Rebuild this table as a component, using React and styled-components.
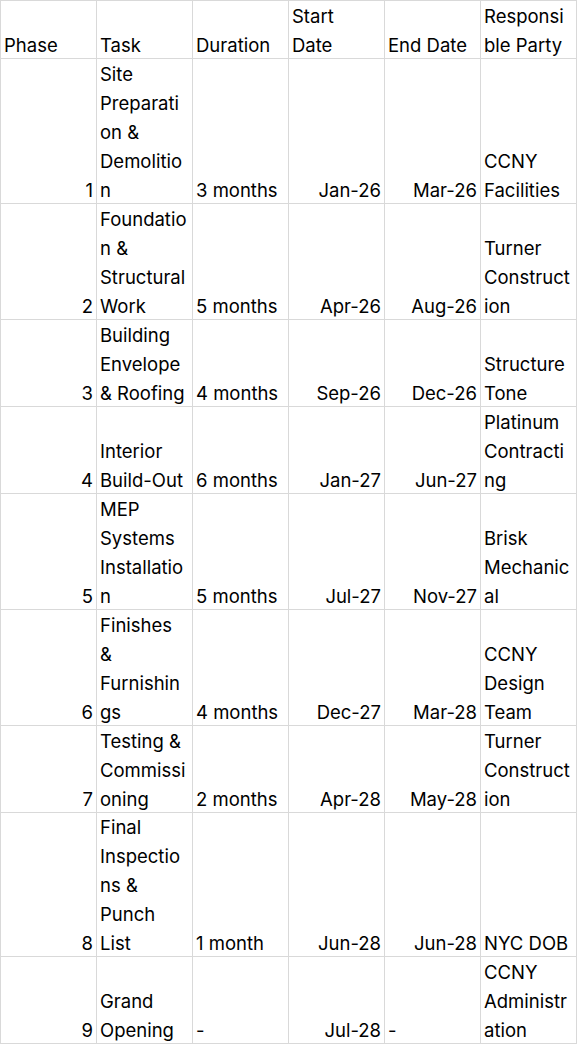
import styled, { createGlobalStyle } from 'styled-components';

const GlobalStyle = createGlobalStyle`
  html, body {
    margin: 0;
    padding: 0;
    background: #ffffff;
  }
  body {
    font-family: Inter, 'Open Sans', 'Liberation Sans', sans-serif;
    color: #000;
  }
`;

const header = [
  ['Phase'],
  ['Task'],
  ['Duration'],
  ['Start', 'Date'],
  ['End Date'],
  ['Responsi', 'ble Party'],
];

const rows = [
  { h: 145, phase: '1', task: ['Site', 'Preparati', 'on &', 'Demolitio', 'n'], duration: '3 months', start: 'Jan-26', end: 'Mar-26', party: ['CCNY', 'Facilities'] },
  { h: 116, phase: '2', task: ['Foundatio', 'n &', 'Structural', 'Work'], duration: '5 months', start: 'Apr-26', end: 'Aug-26', party: ['Turner', 'Construct', 'ion'] },
  { h: 87, phase: '3', task: ['Building', 'Envelope', '& Roofing'], duration: '4 months', start: 'Sep-26', end: 'Dec-26', party: ['Structure', 'Tone'] },
  { h: 87, phase: '4', task: ['Interior', 'Build-Out'], duration: '6 months', start: 'Jan-27', end: 'Jun-27', party: ['Platinum', 'Contracti', 'ng'] },
  { h: 116, phase: '5', task: ['MEP', 'Systems', 'Installatio', 'n'], duration: '5 months', start: 'Jul-27', end: 'Nov-27', party: ['Brisk', 'Mechanic', 'al'] },
  { h: 116, phase: '6', task: ['Finishes', '&', 'Furnishin', 'gs'], duration: '4 months', start: 'Dec-27', end: 'Mar-28', party: ['CCNY', 'Design', 'Team'] },
  { h: 87, phase: '7', task: ['Testing &', 'Commissi', 'oning'], duration: '2 months', start: 'Apr-28', end: 'May-28', party: ['Turner', 'Construct', 'ion'] },
  { h: 144, phase: '8', task: ['Final', 'Inspectio', 'ns &', 'Punch', 'List'], duration: '1 month', start: 'Jun-28', end: 'Jun-28', party: ['NYC DOB'] },
  { h: 87, phase: '9', task: ['Grand', 'Opening'], duration: '-', start: 'Jul-28', end: '-', endLeft: true, party: ['CCNY', 'Administr', 'ation'] },
];

const Lines = ({ lines }) => (
  <>
    {lines.map((l, i) => (
      <Line key={i}>{l}</Line>
    ))}
  </>
);

export default function App() {
  return (
    <>
      <GlobalStyle />
      <Sheet>
        <Row $h={58}>
          {header.map((lines, i) => (
            <Cell key={i}>
              <Lines lines={lines} />
            </Cell>
          ))}
        </Row>
        {rows.map((r) => (
          <Row key={r.phase} $h={r.h}>
            <Cell $right>
              <Line>{r.phase}</Line>
            </Cell>
            <Cell>
              <Lines lines={r.task} />
            </Cell>
            <Cell>
              <Line>{r.duration}</Line>
            </Cell>
            <Cell $right>
              <Line>{r.start}</Line>
            </Cell>
            <Cell $right={!r.endLeft}>
              <Line>{r.end}</Line>
            </Cell>
            <Cell>
              <Lines lines={r.party} />
            </Cell>
          </Row>
        ))}
      </Sheet>
    </>
  );
}

const Sheet = styled.div`
  display: flex;
  flex-direction: column;
  width: 577px;
  border-left: 1px solid #d9d9d9;
  border-top: 1px solid #d9d9d9;
  box-sizing: border-box;
`;

const Row = styled.div`
  display: grid;
  grid-template-columns: repeat(6, 96px);
  height: ${(p) => p.$h}px;
`;

const Cell = styled.div`
  box-sizing: border-box;
  display: flex;
  flex-direction: column;
  justify-content: flex-end;
  align-items: ${(p) => (p.$right ? 'flex-end' : 'flex-start')};
  padding: 0 3px 0 3px;
  border-right: 1px solid #d9d9d9;
  border-bottom: 1px solid #d9d9d9;
  overflow: hidden;
`;

const Line = styled.div`
  flex: none;
  font-size: 18.5px;
  line-height: 29px;
  height: 29px;
  white-space: nowrap;

  &:last-child {
    margin-bottom: -2px;
  }
`;
